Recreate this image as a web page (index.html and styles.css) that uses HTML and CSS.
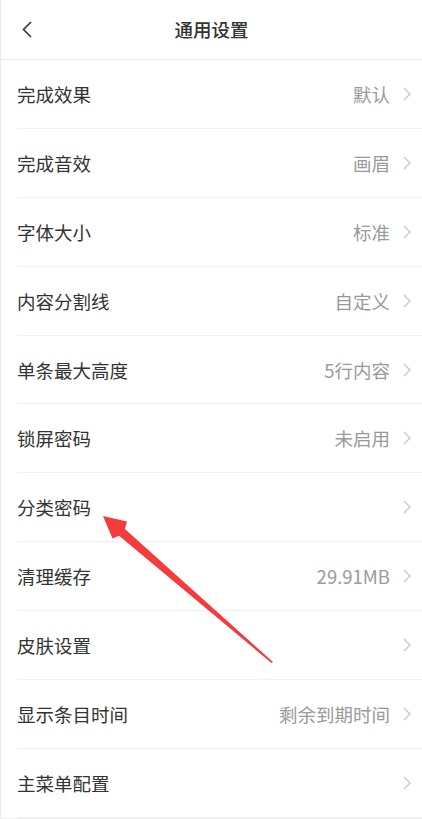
FILE: index.html
```html
<!DOCTYPE html>
<html lang="zh-CN">

<head>
    <meta charset="UTF-8">
    <meta name="viewport" content="width=device-width, initial-scale=1.0">
    <title>通用设置</title>
    <link rel="stylesheet" href="styles.css">
</head>

<body>
    <div class="page">
        <header class="topbar">
            <span class="back">
                <svg width="14" height="18" viewBox="0 0 14 18"><path d="M11 2 L3.5 9.5 L11 17" fill="none" stroke="#333" stroke-width="1.6"/></svg>
            </span>
            <h1>通用设置</h1>
        </header>

        <ul class="settings">
            <li class="row"><span class="label">完成效果</span><span class="value">默认</span><svg class="chev" viewBox="0 0 8 14"><path d="M1 1 L7 7 L1 13"/></svg></li>
            <li class="row"><span class="label">完成音效</span><span class="value">画眉</span><svg class="chev" viewBox="0 0 8 14"><path d="M1 1 L7 7 L1 13"/></svg></li>
            <li class="row"><span class="label">字体大小</span><span class="value">标准</span><svg class="chev" viewBox="0 0 8 14"><path d="M1 1 L7 7 L1 13"/></svg></li>
            <li class="row"><span class="label">内容分割线</span><span class="value">自定义</span><svg class="chev" viewBox="0 0 8 14"><path d="M1 1 L7 7 L1 13"/></svg></li>
            <li class="row"><span class="label">单条最大高度</span><span class="value">5行内容</span><svg class="chev" viewBox="0 0 8 14"><path d="M1 1 L7 7 L1 13"/></svg></li>
            <li class="row"><span class="label">锁屏密码</span><span class="value">未启用</span><svg class="chev" viewBox="0 0 8 14"><path d="M1 1 L7 7 L1 13"/></svg></li>
            <li class="row"><span class="label">分类密码</span><span class="value"></span><svg class="chev" viewBox="0 0 8 14"><path d="M1 1 L7 7 L1 13"/></svg></li>
            <li class="row"><span class="label">清理缓存</span><span class="value">29.91MB</span><svg class="chev" viewBox="0 0 8 14"><path d="M1 1 L7 7 L1 13"/></svg></li>
            <li class="row"><span class="label">皮肤设置</span><span class="value"></span><svg class="chev" viewBox="0 0 8 14"><path d="M1 1 L7 7 L1 13"/></svg></li>
            <li class="row"><span class="label">显示条目时间</span><span class="value">剩余到期时间</span><svg class="chev" viewBox="0 0 8 14"><path d="M1 1 L7 7 L1 13"/></svg></li>
            <li class="row"><span class="label">主菜单配置</span><span class="value"></span><svg class="chev" viewBox="0 0 8 14"><path d="M1 1 L7 7 L1 13"/></svg></li>
        </ul>

        <!-- annotation arrow drawn over the list -->
        <svg class="pointer" width="422" height="819" viewBox="0 0 422 819">
            <polygon points="103,516 127,521.5 124.9,528.9 273,662 271.5,663 119.1,535.7 112.5,538.6" fill="#f53b3b"/>
        </svg>
    </div>
</body>

</html>
```

FILE: styles.css
```css
body {
    margin: 0;
    background-color: #f3f3f3;
    font-family: "Noto Sans CJK SC", "Noto Sans", sans-serif;
}

.page {
    position: relative;
    width: 422px;
    background-color: #fff;
    border-left: 1px solid #ebebeb;
    box-sizing: border-box;
}

.topbar {
    height: 59px;
    display: flex;
    align-items: center;
    justify-content: center;
    position: relative;
    border-bottom: 1px solid #ececec;
}

.topbar h1 {
    margin: 0 0 2px;
    font-size: 18.5px;
    font-weight: 500;
    color: #333;
}

.back {
    position: absolute;
    left: 19px;
    top: 20px;
    display: flex;
}

.settings {
    list-style: none;
    margin: 0;
    padding: 0;
}

.row {
    height: 67.9px;
    margin-left: 16px;
    padding-right: 11px;
    display: flex;
    align-items: center;
    border-bottom: 1px solid #efefef;
    font-size: 18.5px;
}

.label {
    flex: 1;
    color: #333;
}

.value {
    color: #9a9a9a;
    margin-right: 13px;
}

.chev {
    width: 8px;
    height: 14px;
    fill: none;
    stroke: #c6c6c6;
    stroke-width: 1.3;
}

.pointer {
    position: absolute;
    left: -1px;
    top: 0;
    pointer-events: none;
}
```
